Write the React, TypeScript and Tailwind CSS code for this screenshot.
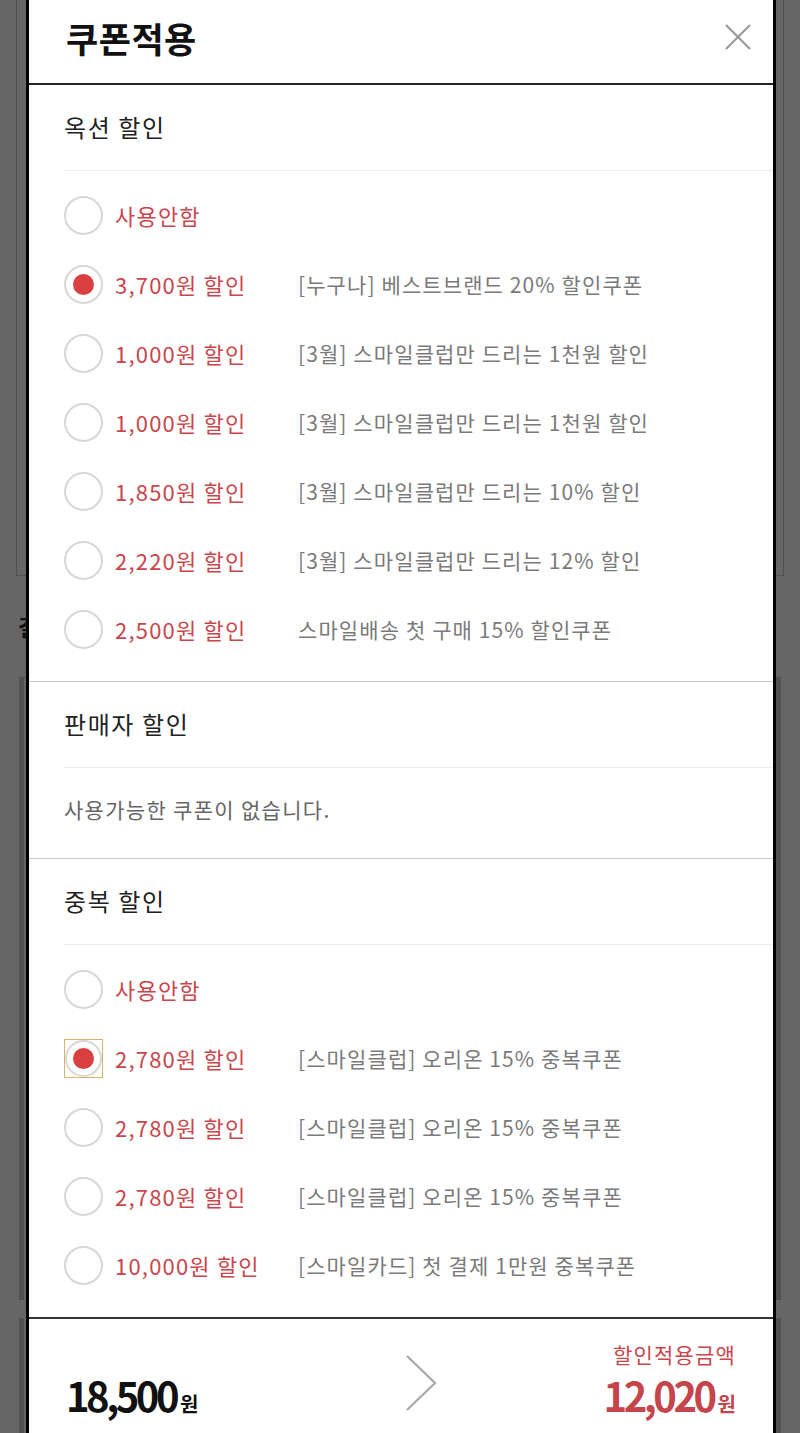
import React from "react";

type Coupon = {
  amount: string;
  name?: string;
  checked?: boolean;
  focused?: boolean;
};

const optionCoupons: Coupon[] = [
  { amount: "사용안함" },
  { amount: "3,700원 할인", name: "[누구나] 베스트브랜드 20% 할인쿠폰", checked: true },
  { amount: "1,000원 할인", name: "[3월] 스마일클럽만 드리는 1천원 할인" },
  { amount: "1,000원 할인", name: "[3월] 스마일클럽만 드리는 1천원 할인" },
  { amount: "1,850원 할인", name: "[3월] 스마일클럽만 드리는 10% 할인" },
  { amount: "2,220원 할인", name: "[3월] 스마일클럽만 드리는 12% 할인" },
  { amount: "2,500원 할인", name: "스마일배송 첫 구매 15% 할인쿠폰" },
];

const dupCoupons: Coupon[] = [
  { amount: "사용안함" },
  { amount: "2,780원 할인", name: "[스마일클럽] 오리온 15% 중복쿠폰", checked: true, focused: true },
  { amount: "2,780원 할인", name: "[스마일클럽] 오리온 15% 중복쿠폰" },
  { amount: "2,780원 할인", name: "[스마일클럽] 오리온 15% 중복쿠폰" },
  { amount: "10,000원 할인", name: "[스마일카드] 첫 결제 1만원 중복쿠폰" },
];

const Radio = ({ checked, focused }: { checked?: boolean; focused?: boolean }) => (
  <span
    className={`flex h-[39px] w-[39px] shrink-0 items-center justify-center ${
      focused ? "border border-[#d6b46c]" : ""
    }`}
  >
    <span className="flex h-full w-full items-center justify-center rounded-full border-2 border-[#d7d7d7] bg-white">
      {checked && <span className="h-[21px] w-[21px] rounded-full bg-[#d9403f]" />}
    </span>
  </span>
);

const CouponRow = ({ coupon }: { coupon: Coupon }) => (
  <div className="flex h-[69px] items-center">
    <Radio checked={coupon.checked} focused={coupon.focused} />
    <span className="ml-[12px] w-[183px] shrink-0 whitespace-nowrap text-[22px] tracking-[1.2px] text-[#c9464d]">
      {coupon.amount}
    </span>
    {coupon.name && (
      <span className="whitespace-nowrap text-[21px] tracking-[1.1px] text-[#7a7a7a]">{coupon.name}</span>
    )}
  </div>
);

const SectionHeading = ({ title }: { title: string }) => (
  <div className="flex h-[86px] items-center border-b border-[#ececec] pb-[2px] text-[24px] tracking-[1.6px] text-[#222]">
    {title}
  </div>
);

export default function App() {
  return (
    <div
      className="relative h-[1433px] overflow-hidden bg-[#666]"
      style={{ fontFamily: '"Noto Sans CJK KR", "Noto Sans", sans-serif' }}
    >
      {/* page behind the dim layer */}
      <div className="flex flex-col px-[16px]">
        <div className="h-[576px] border-x border-b border-[#505050]" />
        <div className="flex h-[101px] items-center pl-[2px] text-[22px] font-bold text-[#111]">결</div>
        <div className="mx-[3px] h-[623px] border-x-[5px] border-t border-[#525252]" />
        <div className="mx-[3px] mt-[18px] h-[120px] border-x-[5px] border-[#525252]" />
      </div>

      {/* modal */}
      <div className="absolute bottom-0 left-[26px] top-0 flex w-[750px] flex-col border-x-[3px] border-black bg-white">
        <div className="flex h-[85px] shrink-0 items-center justify-between border-b-2 border-[#222] pb-[6px] pl-[37px] pr-[21px]">
          <h1 className="text-[35px] font-bold tracking-[0.5px] text-[#111]">쿠폰적용</h1>
          <svg width="28" height="28" viewBox="0 0 28 28" className="mt-[-4px]">
            <path d="M2 2 L26 26 M26 2 L2 26" stroke="#9a9a9a" strokeWidth="2.2" fill="none" />
          </svg>
        </div>

        <div className="flex-1 overflow-hidden">
          <section className="border-b border-[#cccccc] pl-[35px]">
            <SectionHeading title="옥션 할인" />
            <div className="pb-[17px] pt-[10px]">
              {optionCoupons.map((c, i) => (
                <CouponRow key={i} coupon={c} />
              ))}
            </div>
          </section>

          <section className="border-b border-[#cccccc] pl-[35px]">
            <SectionHeading title="판매자 할인" />
            <div className="flex h-[90px] items-center pb-[6px] text-[21px] tracking-[1.3px] text-[#666]">
              사용가능한 쿠폰이 없습니다.
            </div>
          </section>

          <section className="pl-[35px]">
            <SectionHeading title="중복 할인" />
            <div className="pb-[17px] pt-[10px]">
              {dupCoupons.map((c, i) => (
                <CouponRow key={i} coupon={c} />
              ))}
            </div>
          </section>
        </div>

        <div className="flex h-[116px] shrink-0 border-t-2 border-[#333] px-[37px] pb-[6px]">
          <div className="flex flex-1 items-end">
            <span className="text-[40px] font-bold leading-[46px] tracking-[-3.5px] text-[#111]">
              18,500<span className="ml-[4px] text-[20px] tracking-normal">원</span>
            </span>
          </div>
          <svg width="34" height="58" viewBox="0 0 34 58" className="ml-[40px] mt-[35px]">
            <path d="M3 2 L31 29 L3 56" stroke="#a8a8a8" strokeWidth="2.2" fill="none" />
          </svg>
          <div className="flex flex-1 flex-col items-end justify-end">
            <span className="mb-[4px] text-[21px] leading-[28px] tracking-[1.2px] text-[#c9464d]">할인적용금액</span>
            <span className="text-[40px] font-bold leading-[46px] tracking-[-3.5px] text-[#c4454b]">
              12,020<span className="ml-[4px] text-[20px] tracking-normal">원</span>
            </span>
          </div>
        </div>
      </div>
    </div>
  );
}
